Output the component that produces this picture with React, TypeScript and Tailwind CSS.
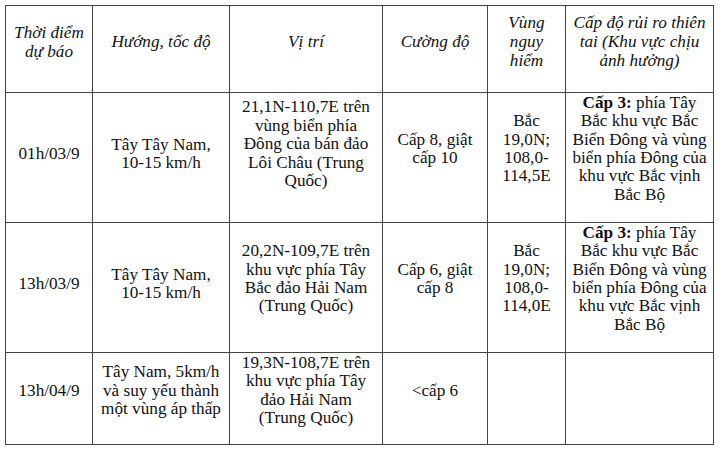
const headers: { lines: string[] }[] = [
  { lines: ["Thời điểm", "dự báo"] },
  { lines: ["Hướng, tốc độ"] },
  { lines: ["Vị trí"] },
  { lines: ["Cường độ"] },
  { lines: ["Vùng", "nguy", "hiểm"] },
  { lines: ["Cấp độ rủi ro thiên", "tai (Khu vực chịu", "ảnh hưởng)"] },
]

type Cell = { lines: string[]; pad: string; bold?: string }

const rows: Cell[][] = [
  [
    { lines: ["01h/03/9"], pad: "pb-[7px]" },
    { lines: ["Tây Tây Nam,", "10-15 km/h"], pad: "pb-[7px]" },
    {
      lines: ["21,1N-110,7E trên", "vùng biển phía", "Đông của bán đảo", "Lôi Châu (Trung", "Quốc)"],
      pad: "pb-[26px]",
    },
    { lines: ["Cấp 8, giật", "cấp 10"], pad: "pb-[17px]" },
    { lines: ["Bắc", "19,0N;", "108,0-", "114,5E"], pad: "pb-[17px]" },
    {
      lines: ["phía Tây", "Bắc khu vực Bắc", "Biển Đông và vùng", "biển phía Đông của", "khu vực Bắc vịnh", "Bắc Bộ"],
      pad: "pb-[17px]",
      bold: "Cấp 3:",
    },
  ],
  [
    { lines: ["13h/03/9"], pad: "pb-[7px]" },
    { lines: ["Tây Tây Nam,", "10-15 km/h"], pad: "pb-[7px]" },
    { lines: ["20,2N-109,7E trên", "khu vực phía Tây", "Bắc đảo Hải Nam", "(Trung Quốc)"], pad: "pb-[17px]" },
    { lines: ["Cấp 6, giật", "cấp 8"], pad: "pb-[17px]" },
    { lines: ["Bắc", "19,0N;", "108,0-", "114,0E"], pad: "pb-[17px]" },
    {
      lines: ["phía Tây", "Bắc khu vực Bắc", "Biển Đông và vùng", "biển phía Đông của", "khu vực Bắc vịnh", "Bắc Bộ"],
      pad: "pb-[17px]",
      bold: "Cấp 3:",
    },
  ],
  [
    { lines: ["13h/04/9"], pad: "pb-[15px]" },
    { lines: ["Tây Nam, 5km/h", "và suy yếu thành", "một vùng áp thấp"], pad: "pb-[15px]" },
    { lines: ["19,3N-108,7E trên", "khu vực phía Tây", "đảo Hải Nam", "(Trung Quốc)"], pad: "pb-[16px]" },
    { lines: ["<cấp 6"], pad: "pb-[15px]" },
    { lines: [], pad: "" },
    { lines: [], pad: "" },
  ],
]

export default function App() {
  return (
    <div className="w-[720px] h-[449px] bg-white pl-[5px] pt-[5px] text-[#111]" style={{ fontFamily: '"Liberation Serif", "Times New Roman", serif' }}>
      <div className="grid grid-cols-[87px_137px_153px_105px_78px_148px] grid-rows-[87px_130px_130px_92px] w-[709px] border-l border-t border-[#444]">
        {headers.map((h, i) => (
          <div
            key={`h-${i}`}
            className="flex flex-col items-center justify-center border-r border-b border-[#444] pb-[15px] italic text-[17.2px] leading-[19px] text-center"
          >
            {h.lines.map((l, j) => (
              <span key={j} className="whitespace-nowrap">
                {l}
              </span>
            ))}
          </div>
        ))}
        {rows.map((row, r) =>
          row.map((c, i) => (
            <div
              key={`c-${r}-${i}`}
              className={`flex flex-col items-center justify-center border-r border-b border-[#444] text-[17.2px] leading-[18.4px] text-center ${c.pad}`}
            >
              {c.lines.map((l, j) => (
                <span key={j} className="whitespace-nowrap">
                  {j === 0 && c.bold ? (
                    <>
                      <b className="font-bold">{c.bold}</b> {l}
                    </>
                  ) : (
                    l
                  )}
                </span>
              ))}
            </div>
          ))
        )}
      </div>
    </div>
  )
}
